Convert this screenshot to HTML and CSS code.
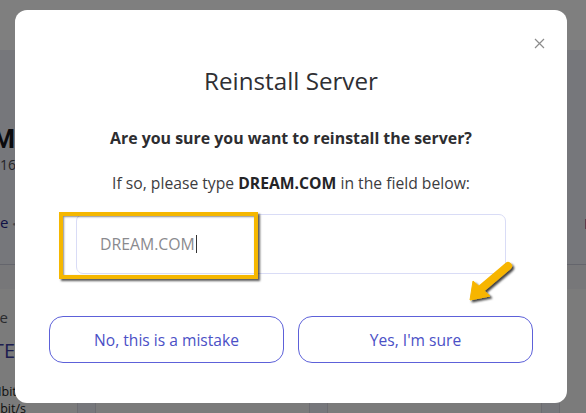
FILE: index.html
```html
<!DOCTYPE html>
<html lang="en">
<head>
<meta charset="utf-8">
<title>Reinstall Server</title>
<link rel="stylesheet" href="styles.css">
</head>
<body>
<div class="page">
  <header class="topbar"></header>
  <section class="summary">
    <div class="edge edge-left">
      <div class="srv-name">DREAM.COM</div>
      <div class="srv-ip">192.168.1.16</div>
      <div class="srv-link">Console <span class="dot">●</span></div>
    </div>
    <div class="summary-mid"></div>
    <div class="edge edge-right">
      <div class="srv-link-r">Network</div>
    </div>
  </section>
  <section class="stats">
    <div class="stat-col stat-left">
      <div class="stat-label">Usage</div>
      <div class="stat-value">BYTE</div>
      <div class="stat-small stat-first">12 Mbit,</div>
      <div class="stat-small stat-last">4 Mbit/s</div>
    </div>
    <div class="stat-gap"></div>
    <div class="stat-col stat-mid"></div>
    <div class="stat-gap"></div>
    <div class="stat-col stat-mid"></div>
    <div class="stat-gap"></div>
    <div class="stat-col stat-end"></div>
  </section>
</div>

<div class="overlay">
  <div class="modal" role="dialog" aria-label="Reinstall Server">
    <button class="close" aria-label="Close">
      <svg width="11" height="11" viewBox="0 0 11 11"><path d="M1 1L10 10M10 1L1 10" stroke="#8c8c8c" stroke-width="1.2" fill="none"/></svg>
    </button>
    <h2 class="title">Reinstall Server</h2>
    <p class="question">Are you sure you want to reinstall the server?</p>
    <p class="hint">If so, please type <b>DREAM.COM</b> in the field below:</p>
    <div class="field-wrap">
      <div class="field"><span class="typed">DREAM.COM</span><span class="caret"></span></div>
      <div class="highlight"></div>
    </div>
    <div class="actions">
      <button class="btn">No, this is a mistake</button>
      <button class="btn">Yes, I'm sure</button>
    </div>
    <svg class="arrow" width="80" height="70" viewBox="0 0 80 70">
      <defs>
        <filter id="sh" x="-30%" y="-30%" width="160%" height="160%">
          <feDropShadow dx="2" dy="2" stdDeviation="1.2" flood-color="#000" flood-opacity="0.75"/>
        </filter>
      </defs>
      <g filter="url(#sh)" fill="#f7b500" stroke="#f7b500">
        <line x1="58" y1="16" x2="32" y2="38" stroke-width="8" stroke-linecap="round"/>
        <polygon points="20,50 23,31 40,46" stroke-width="1" stroke-linejoin="round"/>
      </g>
    </svg>
  </div>
</div>
</body>
</html>
```

FILE: styles.css
```css
* { box-sizing: border-box; }
html, body { margin: 0; padding: 0; }
body {
  font-family: "Open Sans", "Noto Sans", sans-serif;
  background: #f4f4f4;
  width: 586px;
  height: 413px;
  overflow: hidden;
}

/* background page */
.page { width: 586px; height: 413px; display: flex; flex-direction: column; }
.topbar { height: 50px; background: #ffffff; flex: none; }
.summary {
  height: 215px;
  flex: none;
  background: #eceef6;
  border-bottom: 1px solid #c9cbd8;
  display: flex;
}
.edge { width: 15px; flex: none; overflow: hidden; display: flex; flex-direction: column; align-items: flex-end; }
.edge-left { padding-top: 74px; }
.summary-mid { flex: 1; }
.edge-right { align-items: flex-start; padding-top: 163px; width: 19px; }
.srv-name { font-size: 26px; font-weight: 700; color: #16171c; white-space: nowrap; line-height: 30px; font-family: Roboto, sans-serif; }
.srv-ip { font-size: 14px; color: #4a4b52; white-space: nowrap; margin-top: 1px; margin-right: -1px; }
.srv-link { font-size: 15px; color: #22238a; white-space: nowrap; margin-top: 38px; margin-right: -1px; }
.srv-link .dot { color: #8e8e98; font-size: 6px; vertical-align: middle; }
.srv-link-r { font-size: 15px; color: #22238a; white-space: nowrap; padding-left: 17px; }

.stats { flex: 1; display: flex; background: #f6f6f6; border-top: 24px solid #efeff3; }
.stat-col { background: #f6f6f6; }
.stat-left { width: 77px; display: flex; flex-direction: column; align-items: stretch; padding-top: 18px; }
.stat-left > div { width: 15px; display: flex; justify-content: flex-end; white-space: nowrap; }
.stat-gap { width: 19px; background: #eceef6; border-left: 1px solid #d8d9e2; border-right: 1px solid #d8d9e2; }
.stat-mid { width: 213px; }
.stat-end { flex: 1; }
.stat-label { font-size: 15px; color: #55565c; padding-right: 7px; line-height: 20px; }
.stat-value { font-size: 20px; color: #3a3ca0; line-height: 26px; margin-top: 11px; }
.stat-left > .stat-small { font-size: 12.5px; color: #222; line-height: 17px; width: 20px; flex: none; }
.stat-left > .stat-first { margin-top: 19px; }
.stat-left > .stat-last { width: 26px; }

/* overlay + modal */
.overlay {
  position: fixed;
  inset: 0;
  background: rgba(0, 0, 0, 0.5);
  display: flex;
  justify-content: center;
  align-items: flex-start;
  padding-top: 10px;
  padding-right: 4px;
}
.modal {
  position: relative;
  width: 552px;
  height: 393px;
  background: #ffffff;
  border-radius: 12px;
  padding: 56px 34px 0;
  display: flex;
  flex-direction: column;
  align-items: stretch;
}
.close {
  position: absolute;
  top: 27px;
  right: 21px;
  width: 13px;
  height: 13px;
  padding: 1px;
  border: 0;
  background: transparent;
  display: flex;
}
.title {
  margin: 0;
  text-align: center;
  font-size: 24.2px;
  line-height: 30px;
  font-weight: 400;
  color: #2f2f33;
}
.question {
  margin: 32px 0 0;
  text-align: center;
  font-size: 15.9px;
  line-height: 20px;
  font-weight: 700;
  color: #2d2d30;
}
.hint {
  margin: 25px 0 0;
  text-align: center;
  font-size: 15.7px;
  line-height: 20px;
  color: #3c3c40;
}
.hint b { color: #242427; }
.field-wrap { position: relative; margin: 21px 27px 0; }
.field {
  height: 60px;
  border: 1px solid #d9dcf6;
  border-radius: 7px;
  display: flex;
  align-items: center;
  padding-left: 23px;
}
.typed { font-size: 15.8px; color: #8a8a8e; }
.caret { width: 1px; height: 18px; background: #333; margin-left: 1px; }
.highlight {
  position: absolute;
  left: -17px;
  top: -2px;
  width: 199px;
  height: 67px;
  border: 4px solid #f5b700;
  box-shadow: 2px 2px 2px rgba(0, 0, 0, 0.65), inset 1px 1px 2px rgba(0, 0, 0, 0.45);
}
.actions {
  margin-top: 42px;
  display: grid;
  grid-template-columns: 1fr 1fr;
  gap: 14px;
}
.btn {
  height: 47px;
  border: 1px solid #5d61d9;
  border-radius: 14px;
  background: #ffffff;
  color: #4b50c6;
  font-family: "Open Sans", "Noto Sans", sans-serif;
  font-size: 15.6px;
}
.arrow {
  position: absolute;
  left: 435px;
  top: 240px;
}
```
